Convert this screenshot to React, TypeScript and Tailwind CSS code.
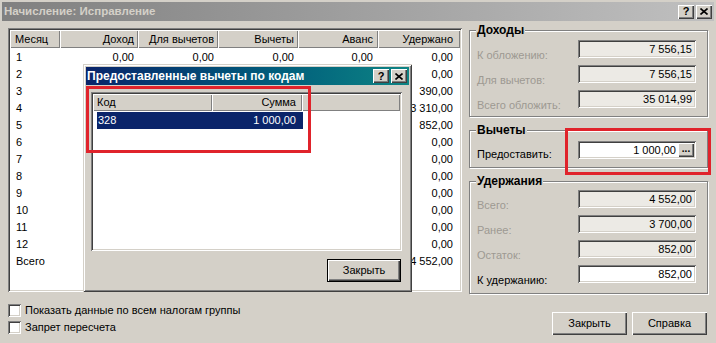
import React from "react";

const sunken =
  "shadow-[inset_1px_1px_0_#808080,inset_-1px_-1px_0_#ffffff,inset_2px_2px_0_#404040,inset_-2px_-2px_0_#d4d0c8]";
const raised =
  "shadow-[inset_1px_1px_0_#ffffff,inset_-1px_-1px_0_#404040,inset_-2px_-2px_0_#808080]";
const headerCell = "shadow-[inset_1px_1px_0_#ffffff,inset_-1px_-1px_0_#808080]";

function CapBtn({ q }: { q?: boolean }) {
  return (
    <div className={`w-[16px] h-[14px] bg-[#d4d0c8] flex items-center justify-center ${raised}`}>
      {q ? (
        <span className="font-bold text-[11px] leading-[11px] text-black">?</span>
      ) : (
        <svg width="8" height="7" viewBox="0 0 8 7">
          <path d="M0.5 0.5 L7.5 6.5 M7.5 0.5 L0.5 6.5" stroke="#000" strokeWidth="1.6" />
        </svg>
      )}
    </div>
  );
}

const cols = [
  { label: "Месяц", cls: "w-[50px] justify-start pl-[5px]" },
  { label: "Доход", cls: "w-[78px] justify-end pr-[4px]" },
  { label: "Для вычетов", cls: "w-[80px] justify-end pr-[4px]" },
  { label: "Вычеты", cls: "w-[80px] justify-end pr-[4px]" },
  { label: "Аванс", cls: "w-[80px] justify-end pr-[5px]" },
  { label: "Удержано", cls: "w-[82px] justify-end pr-[7px]" },
];

const rowCls = [
  "w-[50px] justify-start pl-[6px]",
  "w-[78px] justify-end pr-[4px]",
  "w-[80px] justify-end pr-[4px]",
  "w-[80px] justify-end pr-[4px]",
  "w-[80px] justify-end pr-[5px]",
  "w-[82px] justify-end pr-[7px]",
];

const rows: string[][] = [
  ["1", "0,00", "0,00", "0,00", "0,00", "0,00"],
  ["2", "", "", "", "", "0,00"],
  ["3", "", "", "", "", "390,00"],
  ["4", "", "", "", "", "3 310,00"],
  ["5", "", "", "", "", "852,00"],
  ["6", "", "", "", "", "0,00"],
  ["7", "", "", "", "", "0,00"],
  ["8", "", "", "", "", "0,00"],
  ["9", "", "", "", "", "0,00"],
  ["10", "", "", "", "", "0,00"],
  ["11", "", "", "", "", "0,00"],
  ["12", "", "", "", "", "0,00"],
  ["Всего", "", "", "", "", "4 552,00"],
];

function MainTable() {
  return (
    <div className={`w-[454px] h-[264px] bg-white p-[2px] overflow-hidden ${sunken}`}>
      <div className="flex h-[18px] bg-[#d4d0c8]">
        {cols.map((c) => (
          <div key={c.label} className={`flex items-center h-full ${c.cls} ${headerCell}`}>
            {c.label}
          </div>
        ))}
      </div>
      <div className="pt-[1px]">
        {rows.map((r) => (
          <div key={r[0]} className="flex h-[17px]">
            {r.map((v, i) => (
              <div key={i} className={`flex items-center ${rowCls[i]}`}>
                {v}
              </div>
            ))}
          </div>
        ))}
      </div>
    </div>
  );
}

function Field({ value, disabled }: { value: string; disabled?: boolean }) {
  return (
    <div
      className={`w-[118px] h-[18px] flex items-center justify-end pr-[4px] ${
        disabled ? "bg-[#eceae5]" : "bg-white"
      } ${sunken}`}
    >
      {value}
    </div>
  );
}

function FRow({ label, value, disabled }: { label: string; value: string; disabled?: boolean }) {
  return (
    <div className="flex h-[18px]">
      <div className={`w-[108px] pl-[7px] pt-[9px] ${disabled ? "text-[#9d9992]" : "text-black"}`}>
        {label}
      </div>
      <Field value={value} disabled={disabled} />
    </div>
  );
}

function Group({
  title,
  cls,
  children,
}: {
  title: string;
  cls: string;
  children: React.ReactNode;
}) {
  return (
    <div
      className={`relative border border-[#808080] shadow-[inset_1px_1px_0_#ffffff,1px_1px_0_#ffffff] ${cls}`}
    >
      <div className="absolute left-[6px] top-[-8px] px-[1px] bg-[#d4d0c8] font-bold text-[12px] leading-[15px]">
        {title}
      </div>
      {children}
    </div>
  );
}

function RightPanel() {
  return (
    <div className="w-[239px] mt-[2px] flex flex-col gap-[13px]">
      <Group title="Доходы" cls="h-[87px] pt-[9px] flex flex-col gap-[7px]">
        <FRow label="К обложению:" value="7 556,15" disabled />
        <FRow label="Для вычетов:" value="7 556,15" disabled />
        <FRow label="Всего обложить:" value="35 014,99" disabled />
      </Group>
      <Group title="Вычеты" cls="h-[38px] pt-[10px]">
        <div className="flex h-[18px]">
          <div className="w-[108px] pl-[7px] pt-[7px]">Предоставить:</div>
          <div className={`w-[118px] h-[18px] flex items-stretch bg-white p-[2px] ${sunken}`}>
            <div className="flex-1 flex items-center justify-end pr-[2px]">1 000,00</div>
            <div
              className={`w-[16px] bg-[#d4d0c8] flex items-center justify-center text-[10px] leading-[10px] font-bold pb-[3px] ${raised}`}
            >
              ...
            </div>
          </div>
        </div>
      </Group>
      <Group title="Удержания" cls="h-[113px] pt-[8px] flex flex-col gap-[7px]">
        <FRow label="Всего:" value="4 552,00" disabled />
        <FRow label="Ранее:" value="3 700,00" disabled />
        <FRow label="Остаток:" value="852,00" disabled />
        <FRow label="К удержанию:" value="852,00" />
      </Group>
    </div>
  );
}

function Btn({ children, def, w }: { children: React.ReactNode; def?: boolean; w: string }) {
  if (def) {
    return (
      <div className={`${w} h-[23px] border border-black`}>
        <div className={`w-full h-full flex items-center justify-center bg-[#d4d0c8] ${raised}`}>
          {children}
        </div>
      </div>
    );
  }
  return (
    <div className={`${w} h-[23px] flex items-center justify-center bg-[#d4d0c8] ${raised}`}>
      {children}
    </div>
  );
}

function Check({ label }: { label: string }) {
  return (
    <div className="h-[17px] flex items-center gap-[4px]">
      <div className={`w-[13px] h-[13px] bg-white ${sunken}`} />
      <span>{label}</span>
    </div>
  );
}

function Modal() {
  return (
    <div
      className="absolute left-[83px] top-[64px] w-[329px] h-[228px] bg-[#d4d0c8] p-[3px] flex flex-col shadow-[inset_1px_1px_0_#d4d0c8,inset_-1px_-1px_0_#404040,inset_2px_2px_0_#ffffff,inset_-2px_-2px_0_#808080]"
    >
      <div className="h-[18px] flex items-center bg-linear-to-r from-[#0a246a] to-[#0f8484] pl-[1px] pr-[2px]">
        <span className="flex-1 font-bold text-[12px] text-white">Предоставленные вычеты по кодам</span>
        <div className="flex gap-[2px]">
          <CapBtn q />
          <CapBtn />
        </div>
      </div>
      <div className={`ml-[5px] mt-[7px] w-[311px] h-[159px] bg-white p-[2px] overflow-hidden ${sunken}`}>
        <div className="flex h-[17px] bg-[#d4d0c8]">
          <div className={`w-[119px] flex items-center pl-[4px] ${headerCell}`}>Код</div>
          <div className={`w-[90px] flex items-center justify-end pr-[6px] ${headerCell}`}>Сумма</div>
          <div className={`flex-1 ${headerCell}`} />
        </div>
        <div className="flex h-[17px] ml-[4px] mt-[1px] w-[206px] bg-[#0a246a] text-white">
          <div className="w-[116px] flex items-center pl-[1px]">328</div>
          <div className="w-[90px] flex items-center justify-end pr-[7px]">1 000,00</div>
        </div>
      </div>
      <div className="flex justify-end mt-[8px] pr-[8px]">
        <Btn def w="w-[74px]">
          Закрыть
        </Btn>
      </div>
    </div>
  );
}

export default function App() {
  return (
    <div className="w-[716px] h-[343px] bg-[#d4d0c8] relative overflow-hidden font-['Liberation_Sans',Arial,sans-serif] text-[11px] leading-[13px] text-black pt-[2px] px-[2px]">
      <div className="h-[19px] flex items-center bg-linear-to-r from-[#808080] to-[#c0c0c0] pl-[2px] pr-[2px]">
        <span className="flex-1 font-bold text-[11.5px] text-[#d4d0c8]">Начисление: Исправление</span>
        <div className="flex gap-[2px]">
          <CapBtn q />
          <CapBtn />
        </div>
      </div>
      <div className="px-[6px]">
        <div className="flex gap-[7px] mt-[7px]">
          <MainTable />
          <RightPanel />
        </div>
        <div className="flex justify-between mt-[8px]">
          <div className="flex flex-col">
            <Check label="Показать данные по всем налогам группы" />
            <Check label="Запрет пересчета" />
          </div>
          <div className="flex gap-[5px] mt-[10px] mr-[1px]">
            <Btn w="w-[75px]">Закрыть</Btn>
            <Btn w="w-[75px]">Справка</Btn>
          </div>
        </div>
      </div>
      <Modal />
      <div className="absolute left-[86px] top-[86px] w-[225px] h-[67px] border-[3px] border-[#e0232b]" />
      <div className="absolute left-[565px] top-[128px] w-[146px] h-[47px] border-[3px] border-[#e0232b]" />
    </div>
  );
}
